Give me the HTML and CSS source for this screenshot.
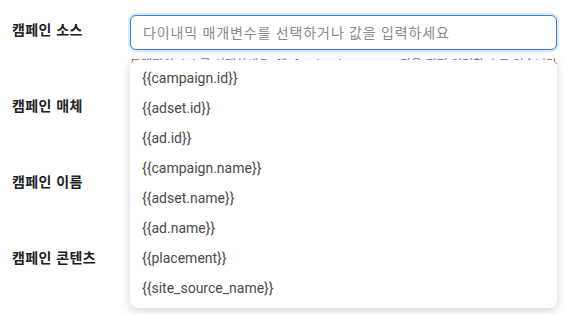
FILE: index.html
```html
<!DOCTYPE html>
<html lang="ko">
<head>
    <meta charset="UTF-8">
    <meta name="viewport" content="width=device-width, initial-scale=1.0">
    <title>UTM 설정</title>
    <link rel="stylesheet" href="styles.css">
</head>
<body>
    <form class="utm-form">
        <div class="row">
            <label class="row-label" for="utm_source">캠페인 소스</label>
            <div class="field">
                <input type="text" id="utm_source" class="text-input focused" placeholder="다이내믹 매개변수를 선택하거나 값을 입력하세요">
                <div class="helper">
                    <span>트래픽의 소스를 선택하세요. 예: facebook</span>
                    <span>값을 직접 입력할 수도 있습니다</span>
                </div>

                <ul class="dropdown">
                    <li>{{campaign.id}}</li>
                    <li>{{adset.id}}</li>
                    <li>{{ad.id}}</li>
                    <li>{{campaign.name}}</li>
                    <li>{{adset.name}}</li>
                    <li>{{ad.name}}</li>
                    <li>{{placement}}</li>
                    <li>{{site_source_name}}</li>
                </ul>
            </div>
        </div>

        <div class="row">
            <label class="row-label" for="utm_medium">캠페인 매체</label>
            <div class="field">
                <input type="text" id="utm_medium" class="text-input">
            </div>
        </div>

        <div class="row">
            <label class="row-label" for="utm_campaign">캠페인 이름</label>
            <div class="field">
                <input type="text" id="utm_campaign" class="text-input">
            </div>
        </div>

        <div class="row">
            <label class="row-label" for="utm_content">캠페인 콘텐츠</label>
            <div class="field">
                <input type="text" id="utm_content" class="text-input">
            </div>
        </div>
    </form>
</body>
</html>
```

FILE: styles.css
```css
body {
    margin: 0;
    padding: 15px 9px 8px 12px;
    min-height: 314px;
    box-sizing: border-box;
    background: #fff;
    font-family: Roboto, "Noto Sans CJK KR", sans-serif;
    color: #222;
}

.utm-form {
    display: flex;
    flex-direction: column;
    gap: 20px;
}

.row {
    display: grid;
    grid-template-columns: 118px 1fr;
    align-items: start;
    min-height: 56px;
}

.row-label {
    font-family: "Noto Sans CJK KR", sans-serif;
    font-size: 14px;
    font-weight: 600;
    letter-spacing: 0.4px;
    line-height: 20px;
    padding-top: 4px;
    color: #202124;
}

.field {
    position: relative;
}

.text-input {
    display: block;
    box-sizing: border-box;
    width: 100%;
    height: 35px;
    padding: 0 12px;
    border: 1px solid #dadce0;
    border-radius: 6px;
    font-family: Roboto, "Noto Sans CJK KR", sans-serif;
    font-size: 14px;
    letter-spacing: 0.9px;
    color: #333;
    outline: none;
    background: #fff;
}

.text-input.focused {
    border: 1.5px solid #2f7de1;
    box-shadow: 0 0 0 2px rgba(47, 125, 225, 0.18);
}

.text-input::placeholder {
    color: #8a8a8a;
}

.helper {
    display: flex;
    justify-content: space-between;
    margin-top: 7px;
    font-family: "Noto Sans CJK KR", sans-serif;
    font-size: 12px;
    line-height: 14px;
    color: #777;
}

.dropdown {
    position: absolute;
    top: 45px;
    left: 0;
    right: 0;
    margin: 0;
    padding: 3px 0 5px;
    list-style: none;
    background: #fff;
    border-radius: 8px;
    box-shadow: 0 3px 10px rgba(0, 0, 0, 0.17);
    z-index: 10;
}

.dropdown li {
    height: 30px;
    line-height: 30px;
    padding: 0 12px;
    font-size: 14px;
    color: #4a4a4a;
}
```
